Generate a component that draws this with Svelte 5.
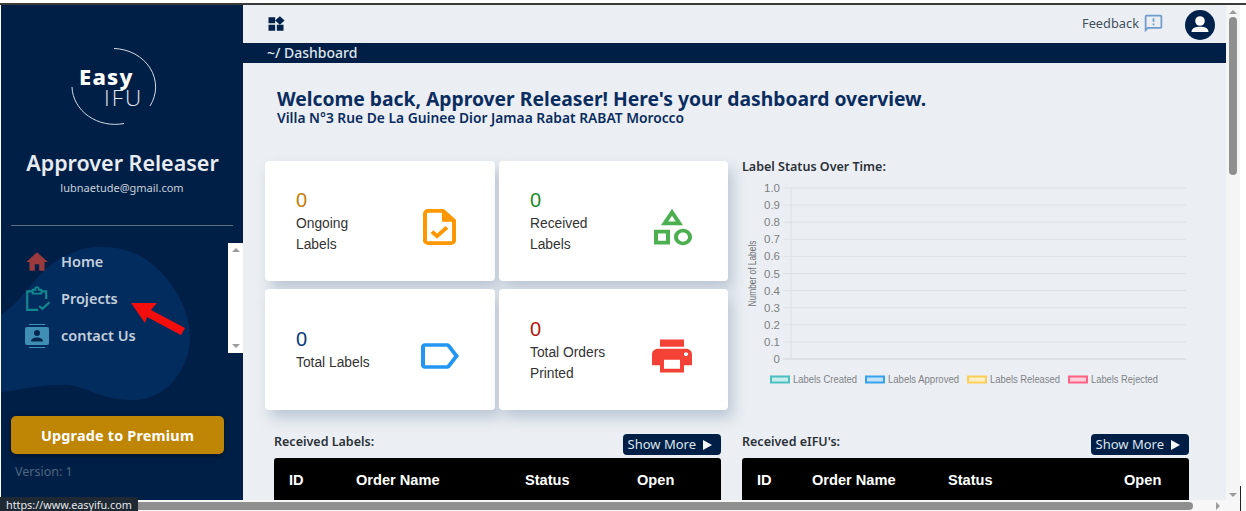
<script>
  const stats = [
    { n: '0', cls: 'orange', lines: ['Ongoing', 'Labels'], icon: 'file' },
    { n: '0', cls: 'green', lines: ['Received', 'Labels'], icon: 'category' },
    { n: '0', cls: 'blue', lines: ['Total Labels'], icon: 'label' },
    { n: '0', cls: 'red', lines: ['Total Orders', 'Printed'], icon: 'print' }
  ];
  const ticks = ['1.0', '0.9', '0.8', '0.7', '0.6', '0.5', '0.4', '0.3', '0.2', '0.1', '0'];
  const legend = [
    { t: 'Labels Created', x: 771, len: 64, s: '#4bc0c0', f: '#c9ecec' },
    { t: 'Labels Approved', x: 866, len: 71, s: '#36a2eb', f: '#c3e1f7' },
    { t: 'Labels Released', x: 968, len: 70, s: '#ffce56', f: '#ffefc8' },
    { t: 'Labels Rejected', x: 1069, len: 67, s: '#ff6384', f: '#ffd0da' }
  ];
</script>

<div class="page">
  <div class="topline"></div>
  <div class="body">
    <aside class="sidebar">
      <svg class="blob" viewBox="0 0 242 500" width="242" height="500" aria-hidden="true">
        <path d="M0 315C14 306 24 292 33 282C44 268 55 260 67 255C80 248 90 247 100 247C118 247 131 251 143 258C158 268 170 282 177 295C185 310 189 324 189 338C189 352 184 365 177 375C166 391 150 400 133 400C120 400 110 398 100 395C88 391 78 386 67 385C44 383 20 390 0 392Z" fill="#032c5e" />
      </svg>
      <div class="logo">
        <svg viewBox="0 0 100 90" width="100" height="90" aria-hidden="true">
          <path d="M49 2.500A43 38.500 0 0 1 85 60" fill="none" stroke="#d5dbe3" stroke-width="1" />
          <path d="M7 41A43 38.500 0 0 0 59 77.500" fill="none" stroke="#d5dbe3" stroke-width="1" />
        </svg>
        <div class="easy">Easy</div>
        <div class="ifu">IFU</div>
      </div>
      <h2>Approver Releaser</h2>
      <p class="mail">lubnaetude@gmail.com</p>
      <hr />
      <div class="navwrap">
        <nav>
          <a href="#home" class="navitem">
            <svg viewBox="0 0 24 24" width="26" height="26" aria-hidden="true"><path d="M10 20v-6h4v6h5v-8h3L12 3 2 12h3v8z" fill="#9a3a3e" /></svg>
            Home
          </a>
          <a href="#projects" class="navitem">
            <svg viewBox="0 0 24 24" width="26" height="26" aria-hidden="true">
              <path d="M8 5H3V22H13M16 5H20.500V12" fill="none" stroke="#14868f" stroke-width="2" />
              <path d="M8 3.500H10.500V2.500A1.500 1.500 0 0 1 13.500 2.500V3.500H16V7H8Z" fill="none" stroke="#14868f" stroke-width="1.700" />
              <path d="M14 18.500L17 21L23.500 15" fill="none" stroke="#14868f" stroke-width="2" />
            </svg>
            Projects
          </a>
          <a href="#contact" class="navitem">
            <svg viewBox="0 0 24 26" width="24" height="26" aria-hidden="true">
              <path d="M4 1H20V2H4ZM4 24H20V25H4Z" fill="#3f8fb5" />
              <rect x="0" y="4" width="24" height="18" rx="2" fill="#3f8fb5" />
              <circle cx="12" cy="10" r="3" fill="#04264f" />
              <path d="M6 18.500C6 15.500 9 14.500 12 14.500S18 15.500 18 18.500Z" fill="#04264f" />
            </svg>
            contact Us
          </a>
        </nav>
        <div class="miniscroll">
          <span class="tri up"></span>
          <span class="tri down"></span>
        </div>
        <svg class="arrow" viewBox="0 0 60 36" width="60" height="36" aria-hidden="true">
          <path d="M1 3L27 3L21 10L55 28L51 35L17 17L15 23Z" fill="#f40d0d" />
        </svg>
      </div>
      <button class="premium">Upgrade to Premium</button>
      <div class="version">Version: 1</div>
    </aside>

    <main>
      <header class="topbar">
        <svg class="widgets" viewBox="0 0 24 24" width="20" height="18" preserveAspectRatio="none" aria-hidden="true">
          <path d="M13 13v8h8v-8h-8zM3 21h8v-8H3v8zM3 3v8h8V3H3zm13.660-1.310L11 7.340 16.660 13l5.660-5.660-5.660-5.650z" fill="#00214a" />
        </svg>
        <div class="feedback">
          <span>Feedback</span>
          <svg viewBox="0 0 24 24" width="21" height="21" aria-hidden="true">
            <path d="M20 2H4c-1.100 0-1.990.9-1.990 2L2 22l4-4h14c1.100 0 2-.9 2-2V4c0-1.100-.9-2-2-2zm0 14H5.170L4 17.170V4h16v12zm-9-4h2v2h-2zm0-6h2v4h-2z" fill="#6f9ccb" />
          </svg>
        </div>
        <svg class="avatar" viewBox="0 0 30 30" width="30" height="30" aria-hidden="true">
          <circle cx="15" cy="15" r="15" fill="#00214a" />
          <circle cx="15" cy="11" r="4.800" fill="#fff" />
          <path d="M6.500 22C6.500 18 11 16.800 15 16.800S23.500 18 23.500 22Z" fill="#fff" />
        </svg>
      </header>
      <div class="crumb">~/ Dashboard</div>

      <div class="welcome">
        <h1>Welcome back, Approver Releaser! Here's your dashboard overview.</h1>
        <p>Villa N°3 Rue De La Guinee Dior Jamaa Rabat RABAT Morocco</p>
      </div>

      <div class="grid">
        <section class="cards">
          {#each stats as s}
            <article class="card">
              <div class="cardtext">
                <div class="num {s.cls}">{s.n}</div>
                {#each s.lines as l}<div class="lbl">{l}</div>{/each}
              </div>
              <svg class="cardicon" viewBox="0 0 24 24" width="48" height="44" preserveAspectRatio="none" aria-hidden="true">
                {#if s.icon === 'file'}
                  <path d="M14 3.200H6.500A1.500 1.500 0 0 0 5 4.700V19.300A1.500 1.500 0 0 0 6.500 20.800H18A1.500 1.500 0 0 0 19.500 19.300V8.500Z" fill="none" stroke="#ff9800" stroke-width="2" stroke-linejoin="round" />
                  <path d="M13.500 3H15L19.800 8V9.200H13.500Z" fill="#ff9800" />
                  <path d="M8.500 14.500L11 17L16 12.200" fill="none" stroke="#ff9800" stroke-width="2" />
                {:else if s.icon === 'category'}
                  <path d="M12 2l-5.500 9h11L12 2zm0 3.840L13.930 9h-3.870L12 5.840zM17.500 13c-2.490 0-4.500 2.010-4.500 4.500s2.010 4.500 4.500 4.500 4.500-2.010 4.500-4.500-2.010-4.500-4.500-4.500zm0 7c-1.380 0-2.500-1.120-2.500-2.500s1.120-2.500 2.500-2.500 2.500 1.120 2.500 2.500-1.120 2.500-2.500 2.500zM3 21.500h8v-8H3v8zm2-6h4v4H5v-4z" fill="#4caf50" />
                {:else if s.icon === 'label'}
                  <path d="M17.630 5.840C17.270 5.330 16.670 5 16 5L5 5.010C3.900 5.010 3 5.900 3 7v10c0 1.100.9 1.990 2 1.990L16 19c.67 0 1.270-.33 1.630-.84L22 12l-4.370-6.160zM16 17H5V7h11l3.550 5L16 17z" fill="#2196f3" />
                {:else}
                  <path d="M19 8H5c-1.660 0-3 1.340-3 3v6h4v4h12v-4h4v-6c0-1.660-1.340-3-3-3zm-3 11H8v-5h8v5zm3-7c-.55 0-1-.45-1-1s.45-1 1-1 1 .45 1 1-.45 1-1 1zm-1-9H6v4h12V3z" fill="#f44336" />
                {/if}
              </svg>
            </article>
          {/each}
        </section>

        <section class="chartbox">
          <h3>Label Status Over Time:</h3>
          <svg class="chart" viewBox="742 176 470 214" width="470" height="214" role="img" aria-label="Label status chart">
            {#each ticks as t, i}
              <line x1="783" x2="1186" y1={188 + i * 17.100} y2={188 + i * 17.100} stroke={i === 10 ? '#cfd3d8' : '#dde1e5'} />
              <text x="780" y={192 + i * 17.100} text-anchor="end" class="tick">{t}</text>
            {/each}
            <line x1="791" x2="791" y1="188" y2="359" stroke="#dde1e5" />
            <text transform="translate(756 273.500) rotate(-90) scale(.76 1)" text-anchor="middle" class="axis">Number of Labels</text>
            {#each legend as l}
              <rect x={l.x} y="376.500" width="18" height="6" fill={l.f} stroke={l.s} stroke-width="2" />
              <text x={l.x + 22} y="383" class="leg" textLength={l.len} lengthAdjust="spacingAndGlyphs">{l.t}</text>
            {/each}
          </svg>
        </section>

        <section class="tablebox">
          <div class="tablehead">
            <h3>Received Labels:</h3>
            <button class="more">Show More <span class="play"></span></button>
          </div>
          <div class="thead one">
            <span>ID</span><span>Order Name</span><span>Status</span><span>Open</span>
          </div>
        </section>

        <section class="tablebox">
          <div class="tablehead">
            <h3>Received eIFU's:</h3>
            <button class="more">Show More <span class="play"></span></button>
          </div>
          <div class="thead two">
            <span>ID</span><span>Order Name</span><span>Status</span><span>Open</span>
          </div>
        </section>
      </div>
    </main>

    <div class="vscroll">
      <span class="tri up"></span>
      <div class="vthumb"></div>
      <span class="tri down"></span>
    </div>
    <div class="edge"></div>
  </div>
  <div class="hscroll">
    <div class="hthumb"></div>
    <span class="tri right"></span>
  </div>
  <div class="status">https://www.easyifu.com</div>
</div>

<style>
  :global(body) { margin: 0; background: #fff; }
  .page {
    position: relative;
    width: 1246px;
    height: 511px;
    overflow: hidden;
    display: flex;
    flex-direction: column;
    font-family: "Noto Sans", "Open Sans", sans-serif;
    background: #fff;
  }
  .topline { height: 2px; margin-top: 3px; background: #3a3a3a; flex: none; }
  .body { display: flex; height: 495px; flex: none; padding-left: 1px; }

  .sidebar {
    position: relative;
    width: 242px;
    flex: none;
    background: #001f47;
    color: #fff;
    display: flex;
    flex-direction: column;
    overflow: hidden;
  }
  .blob { position: absolute; left: 0; top: -5px; }
  .logo { position: relative; width: 100px; height: 90px; margin: 41px 0 0 64px; flex: none; }
  .logo svg { position: absolute; left: 0; top: 0; }
  .easy { position: absolute; left: 14px; top: 16px; font-size: 22px; line-height: 28px; font-weight: 800; letter-spacing: 1.200px; color: #fff; }
  .ifu { position: absolute; left: 39px; top: 38px; font-size: 22.500px; line-height: 28px; font-weight: 300; letter-spacing: 2px; color: #e6eaf0; font-family: "Open Sans", sans-serif; }
  h2 { margin: 12px 0 0; font-size: 21.500px; line-height: 30px; font-weight: 600; text-align: center; color: #e8ecf1; width: 243px; position: relative; }
  .mail { margin: 1px 0 0; font-size: 11px; line-height: 17px; text-align: center; color: #c7d0da; width: 242px; position: relative; }
  hr { margin: 29px 0 0 10px; width: 222px; height: 1px; border: 0; background: #5f6f83; position: relative; flex: none; }
  .navwrap { position: relative; display: flex; justify-content: space-between; height: 110px; margin-top: 17px; flex: none; }
  nav { padding: 0 0 0 23px; display: flex; flex-direction: column; }
  .navitem {
    display: flex;
    align-items: center;
    height: 37px;
    color: #c3cfdc;
    text-decoration: none;
    font-size: 14.500px;
    font-weight: 600;
    line-height: 37px;
  }
  .navitem svg { width: 26px; margin-right: 11px; flex: none; }
  .miniscroll {
    width: 15px;
    background: #fff;
    display: flex;
    flex-direction: column;
    justify-content: space-between;
    align-items: center;
    padding: 5px 0;
    box-sizing: border-box;
  }
  .arrow { position: absolute; left: 129px; top: 57px; }
  .premium {
    width: 213px;
    height: 38px;
    margin: 63px 0 0 10px;
    flex: none;
    position: relative;
    border: 0;
    border-radius: 5px;
    background: #bf8606;
    color: #fff;
    font: 700 14.400px/38px "Noto Sans", sans-serif;
    letter-spacing: .2px;
    box-shadow: 0 2px 6px rgba(0,0,0,.4);
  }
  .version { margin: 9px 0 0 14px; font-size: 12.500px; line-height: 17px; color: #52667f; position: relative; }

  main {
    width: 983px;
    flex: none;
    background: #ebeff3;
    overflow: hidden;
    display: flex;
    flex-direction: column;
  }
  .topbar { height: 38px; flex: none; display: flex; align-items: center; padding-left: 23px; box-sizing: border-box; }
  .widgets { flex: none; margin-top: -1px; }
  .feedback { display: flex; align-items: center; gap: 4px; margin-left: auto; font-size: 12.800px; color: #44505c; margin-top: -2px; }
  .avatar { margin: 2px 11px 0 21px; }
  .crumb { height: 20px; flex: none; background: #001f47; color: #dfe5ec; font-size: 14px; font-weight: 500; line-height: 20px; padding-left: 24px; }
  .welcome { padding: 24px 0 0 34px; height: 98px; flex: none; box-sizing: border-box; }
  h1 { margin: 0; font-size: 19.300px; line-height: 23px; font-weight: 700; color: #0a2c5f; white-space: nowrap; }
  .welcome p { margin: 0; font-size: 13.800px; line-height: 16px; font-weight: 600; color: #0a2c5f; white-space: nowrap; }

  .grid {
    display: grid;
    grid-template-columns: 463px 470px;
    column-gap: 14px;
    padding-left: 22px;
    grid-template-rows: 264px auto;
    row-gap: 0;
  }
  .cards { display: grid; grid-template-columns: 230px 229px; grid-template-rows: 120px 121px; gap: 8px 4px; }
  .card {
    background: #fff;
    border-radius: 4px;
    box-shadow: 5px 8px 14px rgba(130,150,175,.45);
    display: flex;
    align-items: center;
    justify-content: space-between;
    padding: 0 31px;
    font-family: "Liberation Sans", Arial, sans-serif;
  }
  .cardicon { flex: none; margin-top: 12px; margin-right: 1px; }
  .num { font-size: 20px; line-height: 26px; }
  .orange { color: #c77d0a; }
  .green { color: #1e8a2a; }
  .blue { color: #0a3a7a; }
  .red { color: #b3170e; }
  .lbl { font-size: 13.800px; line-height: 21px; color: #333; }

  h3 { margin: 0; font-size: 12.500px; line-height: 17px; font-weight: 600; color: #2b3138; }
  .chartbox { margin-top: -3px; }
  .chart { display: block; margin-top: 1px; }
  .tick { font: 11.500px "Liberation Sans", Arial, sans-serif; fill: #7d7f82; }
  .axis { font: 11px "Liberation Sans", Arial, sans-serif; fill: #6e7073; }
  .leg { font: 10.500px "Liberation Sans", Arial, sans-serif; fill: #808285; }

  .tablehead { display: flex; justify-content: space-between; align-items: flex-start; height: 33px; padding-top: 9px; }
  .tablebox:nth-of-type(3) { padding: 0 7px 0 9px; }
  .tablebox:nth-of-type(4) { padding-right: 23px; }
  .tablehead h3 { margin-top: -1px; }
  .more {
    height: 21px;
    padding: 0 9px 0 5px;
    border: 0;
    border-radius: 4px;
    background: #001f47;
    color: #dfe5ec;
    font: 13px/21px "Noto Sans", sans-serif;
    display: flex;
    align-items: center;
    gap: 7px;
    margin-top: 0;
  }
  .play { width: 0; height: 0; border-left: 9px solid #f4f6f8; border-top: 5px solid transparent; border-bottom: 5px solid transparent; }
  .thead {
    display: grid;
    height: 42px;
    align-items: center;
    background: #000;
    color: #fff;
    border-radius: 3px 3px 0 0;
    font: 700 14.600px "Liberation Sans", Arial, sans-serif;
    margin-top: -9px;
  }
  .thead span { position: relative; top: 1px; }
  .one { grid-template-columns: 67px 169px 112px auto; padding-left: 15px; }
  .two { grid-template-columns: 55px 136px 176px auto; padding-left: 15px; }

  .vscroll {
    width: 14px;
    flex: none;
    background: #f5f5f5;
    display: flex;
    flex-direction: column;
    align-items: center;
    padding-top: 5px;
    box-sizing: border-box;
    position: relative;
  }
  .vthumb { width: 8px; height: 158px; margin-top: 3px; border-radius: 4px; background: #8f8f8f; }
  .vscroll .down { position: absolute; bottom: 3px; left: 3px; }
  .edge { width: 1px; height: 26px; margin-top: 481px; background: #222; flex: none; position: relative; z-index: 1; }
  .tri { width: 0; height: 0; display: block; }
  .up { border-left: 4px solid transparent; border-right: 4px solid transparent; border-bottom: 4px solid #9b9b9b; }
  .down { border-left: 4px solid transparent; border-right: 4px solid transparent; border-top: 4px solid #9b9b9b; }
  .right { border-top: 4px solid transparent; border-bottom: 4px solid transparent; border-left: 4px solid #9b9b9b; margin-left: 23px; }
  .hscroll { height: 11px; flex: none; display: flex; align-items: flex-end; background: #f7f7f7; padding: 0 0 1px 100px; box-sizing: border-box; }
  .hthumb { width: 1093px; height: 8px; border-radius: 0 4px 4px 0; background: #8f8f8f; }
  .status {
    position: absolute;
    left: 0;
    bottom: 0;
    width: 138px;
    height: 14px;
    background: #1f2933;
    border-radius: 0 4px 0 0;
    color: #e4e8ec;
    font-size: 10.800px;
    line-height: 15px;
    padding-left: 6px;
    box-sizing: border-box;
    white-space: nowrap;
  }
</style>
